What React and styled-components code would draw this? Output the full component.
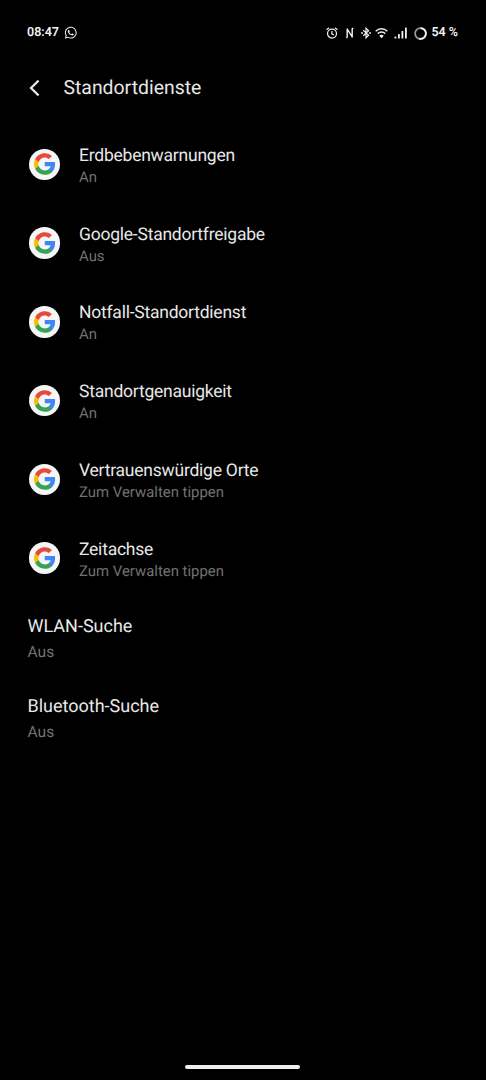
import React from 'react';
import styled, { createGlobalStyle } from 'styled-components';
import { FaWhatsapp } from 'react-icons/fa';

const GlobalStyle = createGlobalStyle`
  body {
    margin: 0;
    background-color: #000;
    font-family: Roboto, sans-serif;
    text-rendering: geometricPrecision;
  }
`;
const Root = styled.div`
  height: 100vh;
  display: flex;
  flex-direction: column;
  background-color: #000;
  color: #e8e8e8;
`;
const StatusBar = styled.div`
  display: flex;
  justify-content: space-between;
  height: 66px;
  padding: 0 28px 0 27px;
  color: #f2f2f2;
`;
const StatusGroup = styled.div`
  display: flex;
  align-items: center;
  gap: ${props => props.$gap}px;
  > svg {
    flex: none;
  }
`;
const StatusText = styled.span`
  font-size: 12.5px;
  font-weight: 600;
  line-height: 16px;
  white-space: nowrap;
`;
const Appbar = styled.header`
  display: flex;
  align-items: center;
  height: 44px;
  padding: 0 28px;
  margin-bottom: 15px;
`;
const BackButton = styled.button`
  display: flex;
  width: 35.5px;
  padding: 0;
  border: none;
  background: none;
  color: inherit;
`;
const Title = styled.h1`
  margin: 0;
  font-size: 19.4px;
  font-weight: 400;
  line-height: 22px;
`;
const List = styled.ul`
  list-style: none;
  margin: 0;
  padding: 0;
`;
const ServiceItem = styled.li`
  display: flex;
  align-items: center;
  height: 78.75px;
  padding-left: 28.5px;
`;
const Avatar = styled.span`
  display: flex;
  align-items: center;
  justify-content: center;
  width: 31.5px;
  height: 31.5px;
  margin-right: 19px;
  border-radius: 50%;
  background-color: #f6f6f6;
`;
const ItemText = styled.div`
  display: flex;
  flex-direction: column;
  padding-top: ${props => props.$offset || 0}px;
`;
const Label = styled.span`
  font-size: ${props => (props.$large ? 18 : 17.5)}px;
  letter-spacing: ${props => (props.$large ? 0 : -0.23)}px;
  line-height: 22px;
`;
const Summary = styled.span`
  font-size: ${props => (props.$large ? 15.6 : 14.9)}px;
  line-height: 20px;
  margin-top: ${props => (props.$large ? 4 : 0)}px;
  color: #727272;
`;
const ScanItem = styled.li`
  height: 80px;
  padding: 18px 27.5px 0;
  box-sizing: border-box;
`;
const Handle = styled.div`
  width: 115px;
  height: 4px;
  margin: auto 0 11px 185px;
  border-radius: 2px;
  background-color: #f0eff0;
`;

const GoogleLogo = () => (
  <svg width="23.5" height="24" viewBox="0 0 24 24">
    <path fill="#4285f4" d="M22.56 12.25c0-.78-.07-1.53-.2-2.25H12v4.26h5.92c-.26 1.37-1.04 2.53-2.21 3.31v2.77h3.57c2.08-1.92 3.28-4.74 3.28-8.09z" />
    <path fill="#34a353" d="M12 23c2.97 0 5.46-.98 7.28-2.66l-3.57-2.77c-.98.66-2.23 1.06-3.71 1.06-2.86 0-5.29-1.93-6.16-4.53H2.18v2.84C3.99 20.53 7.7 23 12 23z" />
    <path fill="#fbbc05" d="M5.84 14.09c-.22-.66-.35-1.36-.35-2.09s.13-1.43.35-2.09V7.07H2.18C1.43 8.55 1 10.22 1 12s.43 3.45 1.18 4.93l3.66-2.84z" />
    <path fill="#e64a3d" d="M12 5.38c1.62 0 3.06.56 4.21 1.64l3.15-3.15C17.45 2.09 14.97 1 12 1 7.7 1 3.99 3.47 2.18 7.07l3.66 2.84c.87-2.6 3.3-4.53 6.16-4.53z" />
  </svg>
);

const AlarmIcon = () => (
  <svg width="12" height="12" viewBox="0 0 12 12" fill="none" stroke="currentColor" strokeWidth="1.2">
    <circle cx="6" cy="6.6" r="4.5" />
    <path d="M5.9 4v2.8l2 1.2M.6 2.7L3 .7M11.4 2.7L9 .7" />
  </svg>
);

const NfcIcon = () => (
  <svg width="15" height="12" viewBox="0 0 15 12" fill="none" stroke="currentColor" strokeWidth="1.4" strokeLinejoin="round">
    <path d="M4.2 10.8l1-.7V2l5 7.9V1.9l1-.8" />
  </svg>
);

const BluetoothIcon = () => (
  <svg width="10" height="12" viewBox="0 0 10 12" fill="none" stroke="currentColor" strokeWidth="1.2">
    <path d="M2.2 3.3l5.4 5L5 10.8V1.2l2.6 2.5-5.4 5" />
    <circle cx="1" cy="6" r=".9" fill="currentColor" stroke="none" />
    <circle cx="9" cy="6" r=".9" fill="currentColor" stroke="none" />
  </svg>
);

const WifiIcon = () => (
  <svg width="15" height="12" viewBox="0 0 15 12" fill="none" stroke="currentColor" strokeWidth="1.5">
    <path d="M.7 4.2a8.3 8.3 0 0 1 11.6 0M2.8 6.6a5.3 5.3 0 0 1 7.4 0" />
    <path d="M6.5 11.3L4.3 8.7a3.2 3.2 0 0 1 4.4 0z" fill="currentColor" stroke="none" />
  </svg>
);

const SignalIcon = () => (
  <svg width="16" height="12" viewBox="0 0 16 12" fill="currentColor">
    <rect x=".5" y="9.5" width="1.8" height="2" rx=".5" />
    <rect x="4" y="7" width="1.8" height="4.5" rx=".5" />
    <rect x="7.5" y="4" width="1.8" height="7.5" rx=".5" />
    <rect x="11" y=".5" width="1.8" height="11" rx=".5" />
  </svg>
);

// Ring battery: dim track with the charged part on top
const BatteryIcon = () => (
  <svg width="13" height="13" viewBox="0 0 13 13" fill="none" strokeWidth="1.8">
    <circle cx="6.5" cy="6.5" r="5.4" stroke="#969696" />
    <path d="M6.5 1.1a5.4 5.4 0 1 1-1.35 10.63" stroke="currentColor" />
  </svg>
);

const BackIcon = () => (
  <svg width="13" height="18" viewBox="0 0 13 18" fill="none" stroke="currentColor" strokeWidth="2.2">
    <path d="M10.6 1.6L3 9l7.6 7.4" />
  </svg>
);

const services = [
  { label: 'Erdbebenwarnungen', summary: 'An' },
  { label: 'Google-Standortfreigabe', summary: 'Aus' },
  { label: 'Notfall-Standortdienst', summary: 'An' },
  { label: 'Standortgenauigkeit', summary: 'An' },
  { label: 'Vertrauenswürdige Orte', summary: 'Zum Verwalten tippen' },
  { label: 'Zeitachse', summary: 'Zum Verwalten tippen' },
];

const scans = [
  { label: 'WLAN-Suche', summary: 'Aus' },
  { label: 'Bluetooth-Suche', summary: 'Aus' },
];

const App = () => (
  <Root>
    <GlobalStyle />
    <StatusBar>
      <StatusGroup $gap={5}>
        <StatusText>08:47</StatusText>
        <FaWhatsapp size={13.5} />
      </StatusGroup>
      <StatusGroup $gap={4}>
        <AlarmIcon />
        <NfcIcon />
        <BluetoothIcon />
        <WifiIcon />
        <SignalIcon />
        <BatteryIcon />
        <StatusText>54 %</StatusText>
      </StatusGroup>
    </StatusBar>
    <Appbar>
      <BackButton aria-label="Zurück"><BackIcon /></BackButton>
      <Title>Standortdienste</Title>
    </Appbar>
    <List>
      {services.map(({ label, summary }) => (
        <ServiceItem key={label}>
          <Avatar><GoogleLogo /></Avatar>
          <ItemText $offset={3}>
            <Label>{label}</Label>
            <Summary>{summary}</Summary>
          </ItemText>
        </ServiceItem>
      ))}
    </List>
    <List>
      {scans.map(({ label, summary }) => (
        <ScanItem key={label}>
          <ItemText>
            <Label $large>{label}</Label>
            <Summary $large>{summary}</Summary>
          </ItemText>
        </ScanItem>
      ))}
    </List>
    <Handle />
  </Root>
);

export default App;
